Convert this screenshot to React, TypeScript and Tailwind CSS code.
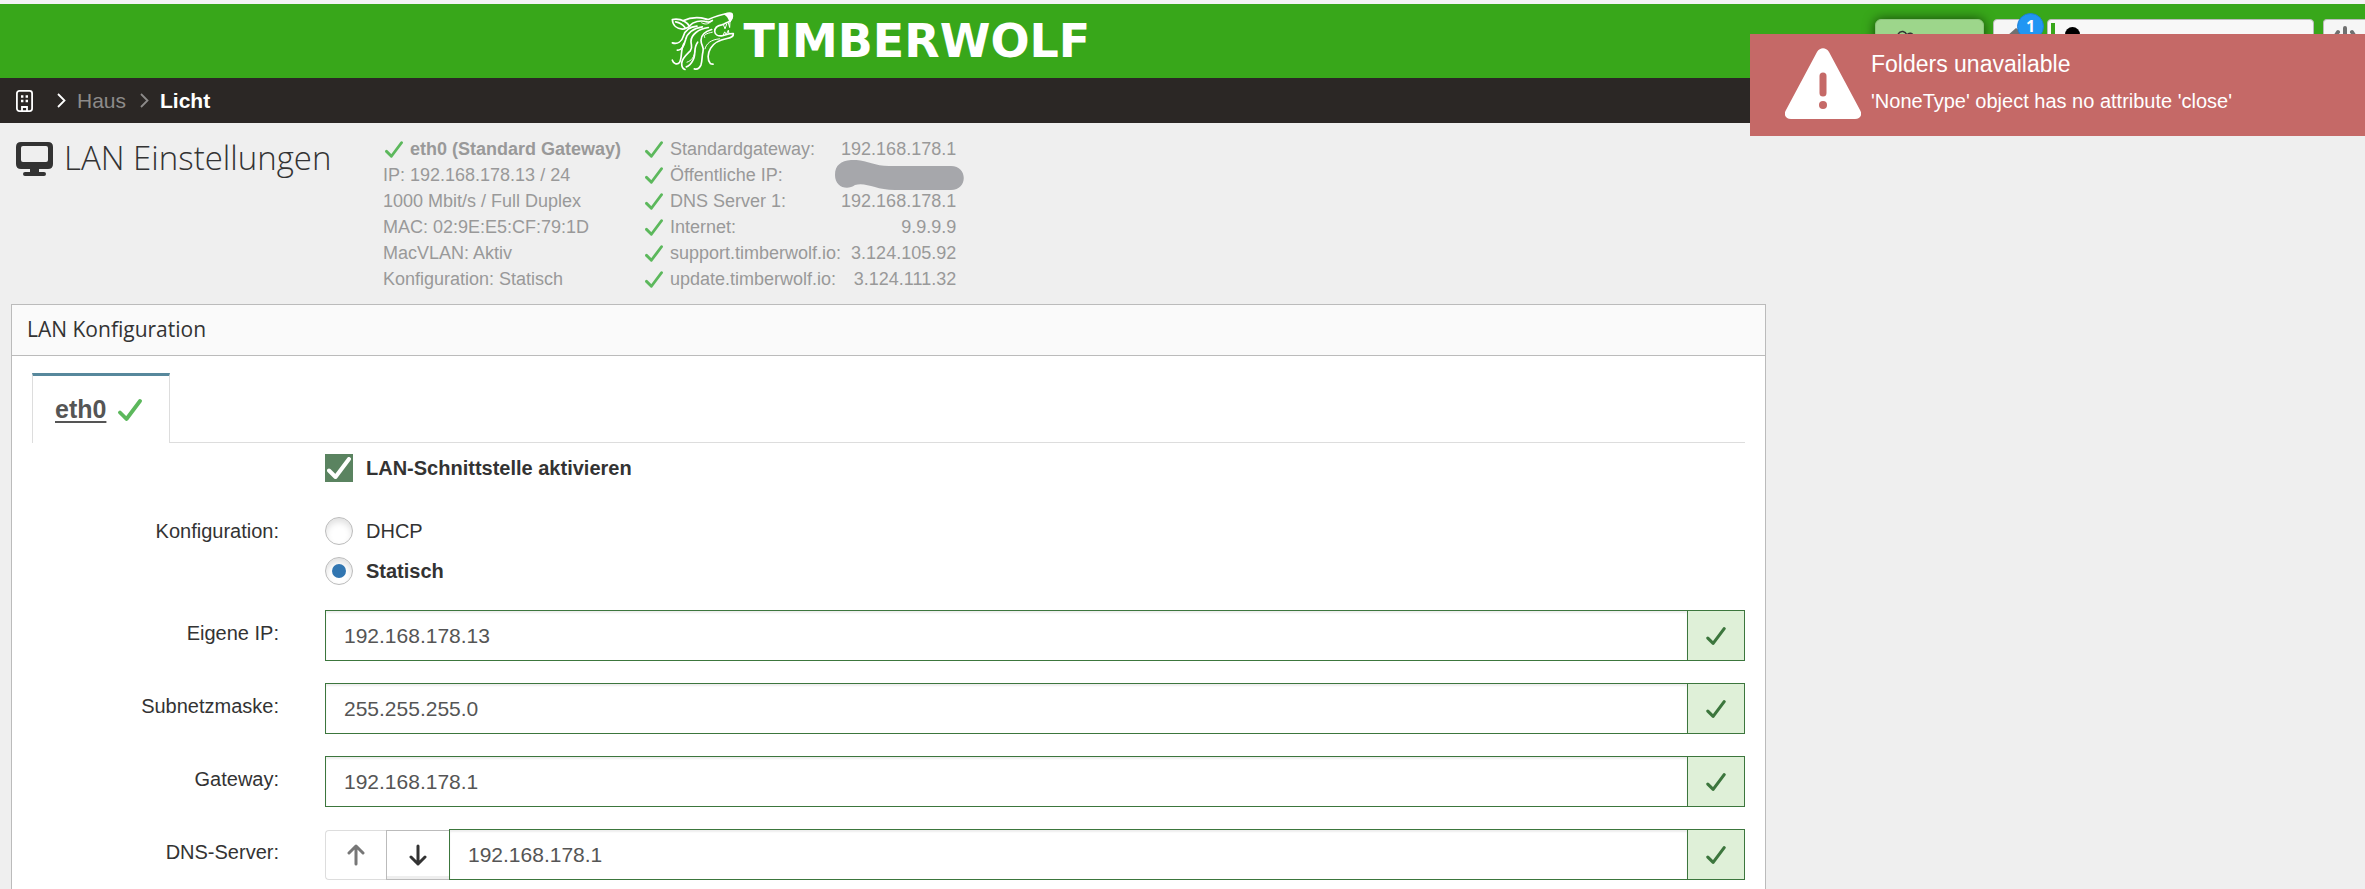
import React, { useState } from "react";

type Field = { id: string; label: string; value: string };

const interfaceInfo = [
  "IP: 192.168.178.13 / 24",
  "1000 Mbit/s / Full Duplex",
  "MAC: 02:9E:E5:CF:79:1D",
  "MacVLAN: Aktiv",
  "Konfiguration: Statisch",
];

const checks = [
  { label: "Standardgateway:", value: "192.168.178.1" },
  { label: "Öffentliche IP:", value: "" },
  { label: "DNS Server 1:", value: "192.168.178.1" },
  { label: "Internet:", value: "9.9.9.9" },
  { label: "support.timberwolf.io:", value: "3.124.105.92" },
  { label: "update.timberwolf.io:", value: "3.124.111.32" },
];

const initialFields: Field[] = [
  { id: "ip", label: "Eigene IP:", value: "192.168.178.13" },
  { id: "mask", label: "Subnetzmaske:", value: "255.255.255.0" },
  { id: "gateway", label: "Gateway:", value: "192.168.178.1" },
  { id: "dns", label: "DNS-Server:", value: "192.168.178.1" },
];

function Check({ className, width = 3.8 }: { className: string; width?: number }) {
  return (
    <svg viewBox="0 0 24 22" fill="none" stroke="currentColor" strokeWidth={width} strokeLinecap="round" strokeLinejoin="round" className={className}>
      <path d="M2 13.5 L8.5 20 L22 2" />
    </svg>
  );
}

function Chevron({ className }: { className: string }) {
  return (
    <svg viewBox="0 0 9 15" fill="none" stroke="currentColor" strokeWidth="1.8" className={className}>
      <path d="M1 1 L7.5 7.5 L1 14" />
    </svg>
  );
}

function WolfLogo() {
  return (
    <svg viewBox="94 34 192 176" fill="none" stroke="white" strokeWidth="5" strokeLinecap="round" strokeLinejoin="round" className="h-[59px] w-16">
      {/* ear */}
      <path d="M98 56 C99 74 112 84 128 85 C136 85 142 80 150 77 C140 62 124 52 98 56 Z" />
      <path d="M108 63 C120 65 130 72 136 80" />
      {/* head and snout */}
      <path d="M130 60 C150 50 168 49 184 51 C192 52 198 56 206 56 C224 48 244 41 262 38 C274 36 279 38 278 46 C277 54 274 58 271 61" />
      <path d="M262 38 C274 36 279 38 278 46 C277 54 274 58 271 61 C268 52 264 44 256 40 Z" fill="white" />
      <path d="M150 75 C160 62 182 57 202 63 C208 65 214 62 218 59" />
      <path d="M186 66 C196 72 206 70 212 64" strokeWidth="3" />
      {/* jaws */}
      <path d="M271 61 C262 64 254 70 246 72 C234 74 225 80 225 92 C226 102 236 106 246 105 C256 104 268 97 281 98 C282 106 274 111 262 113 C240 117 222 126 213 142 C203 158 203 178 212 188 C215 190 218 190 220 190" />
      <path d="M251 71 L256 84 L261 70 M266 66 L270 80 L271 62" strokeWidth="3" />
      <path d="M250 104 L255 93 L260 101 L266 88 L268 99" strokeWidth="3" />
      {/* fur */}
      <path d="M172 76 C148 78 136 90 131 106 C126 122 114 131 98 126" />
      <path d="M188 78 C160 82 142 98 138 116 C134 132 128 150 113 148" />
      <path d="M133 128 C122 146 128 170 120 184 C113 194 101 188 98 178" />
      <path d="M206 80 C176 84 154 102 154 122 C154 134 160 140 152 150 C140 162 126 172 126 188 C126 198 130 204 136 206" />
      <path d="M174 124 C160 142 170 162 160 178 C155 188 148 196 140 198" />
      <path d="M166 150 C164 168 156 180 142 184" strokeWidth="3" />
      <path d="M216 86 C196 92 184 104 184 118 C184 134 194 138 190 152 C186 168 188 180 184 192 C180 202 172 206 164 204" />
      <path d="M218 94 C200 98 190 102 195 110 M240 114 C214 116 200 128 196 144" strokeWidth="3" />
    </svg>
  );
}

function TopBar() {
  return (
    <header className="flex h-[78px] border-t-4 border-[#f3f3f3] bg-[#38a71a]">
      <div className="flex w-3/4 items-center justify-center gap-2 pr-3 text-white">
        <WolfLogo />
        <span className="font-['DejaVu_Sans',sans-serif] text-[46px] leading-none font-bold">TIMBERWOLF</span>
      </div>
      <div className="flex flex-1 items-start justify-end gap-[9px] pt-[15px]">
        <button aria-label="Cloud" className="flex h-10 w-[109px] items-start rounded-md border border-[#8cc47c] bg-[#9dd68b] pt-2.5 pl-5 text-[#333] shadow-[0_0_12px_rgba(0,0,0,0.6)]">
          <svg viewBox="0 0 22 16" fill="none" stroke="currentColor" strokeWidth="1.5" className="h-4 w-[22px]">
            <path d="M4 9 C0 5 3 1 7 1.5 C9 2 10 3 11 5 C13 2 17 3 17 6 M4 9 C1 11 3 15 6 15 H17 C22 13 21 7 17 6" />
          </svg>
        </button>
        <button aria-label="Meldungen" className="relative flex h-10 w-[45px] items-start rounded-t-sm border border-[#bbb] bg-[#f6f6f6] pt-2 pl-3 text-[#707070]">
          <svg viewBox="0 0 24 22" fill="currentColor" className="h-[22px] w-6">
            <path d="M10 0 L24 10 V22 H1 V8 Z" />
          </svg>
          <span className="absolute -top-[7px] left-[23px] flex h-[27px] w-[27px] justify-center rounded-full border border-[#1c80d8] bg-[#2196f3] pt-0.5 font-['Open_Sans',sans-serif] text-base leading-5 font-bold text-white">1</span>
        </button>
        <button aria-label="Benutzer" className="flex h-10 w-[267px] items-start gap-2.5 rounded-t-sm border border-[#bbb] bg-[#f8f8f8] pt-[3px] pl-[3px]">
          <span className="h-8 w-1 bg-[#38a71a]" />
          <span className="mt-1 h-4 w-[15px] rounded-full bg-black" />
        </button>
        <button aria-label="Abmelden" className="flex h-10 w-[42px] items-start justify-center rounded-tl-sm border border-r-0 border-[#bbb] bg-[#f6f6f6] pt-1.5 text-[#707070]">
          <svg viewBox="0 0 24 24" fill="none" stroke="currentColor" strokeWidth="4" strokeLinecap="round" className="h-6 w-6">
            <path d="M12 2 V12 M5 6 C-1 13 4 22 12 22 C20 22 25 13 19 6" />
          </svg>
        </button>
      </div>
    </header>
  );
}

function Toast() {
  return (
    <div role="alert" className="absolute top-[34px] right-0 flex h-[102px] w-[615px] bg-[#c56967] pt-3.5 pl-[35px] text-white">
      <svg viewBox="0 0 76 71" className="h-[71px] w-[76px]">
        <path d="M32 4 C35 -1 41 -1 44 4 L75 62 C78 67 75 71 70 71 H6 C1 71 -2 67 1 62 Z" fill="white" />
        <path d="M38 28 V45" stroke="#c56967" strokeWidth="7" strokeLinecap="round" />
        <circle cx="38" cy="57" r="4" fill="#c56967" />
      </svg>
      <div className="pl-2.5">
        <p className="text-[23px] leading-8">Folders unavailable</p>
        <p className="mt-[5px] text-xl leading-8">'NoneType' object has no attribute 'close'</p>
      </div>
    </div>
  );
}

function Breadcrumb() {
  return (
    <nav className="flex h-[45px] items-center bg-[#2b2725] pl-4 text-[21px]">
      <a href="#" aria-label="Start" className="text-white">
        <svg viewBox="0 0 17 22" fill="none" stroke="currentColor" strokeWidth="1.8" className="h-[22px] w-[17px]">
          <rect x="0.9" y="0.9" width="15.2" height="20.2" rx="2.5" />
          <path d="M6 21 V17 H11 V21" />
          <path d="M5 6.5 H7.4 M9.6 6.5 H12 M5 11 H7.4 M9.6 11 H12" strokeWidth="2.4" />
        </svg>
      </a>
      <Chevron className="ml-6 h-[15px] w-[9px] text-white" />
      <a href="#" className="ml-[11px] text-[#8d8b8a]">Haus</a>
      <Chevron className="ml-3.5 h-[15px] w-[9px] text-[#8d8b8a]" />
      <a href="#" className="ml-[11px] font-bold text-white">Licht</a>
    </nav>
  );
}

function PageHead() {
  return (
    <div className="flex pt-[13px] text-lg leading-[26px] text-[#999]">
      <div className="flex w-[383px] shrink-0 items-start pl-4 text-[#333]">
        <svg viewBox="0 0 37 34" fill="currentColor" className="mt-1.5 h-[34px] w-[37px]">
          <path fillRule="evenodd" d="M5 0 H32 Q37 0 37 5 V22 Q37 27 32 27 H23 V30 H28 Q30 30 30 32 T28 34 H9 Q7 34 7 32 T9 30 H14 V27 H5 Q0 27 0 22 V5 Q0 0 5 0 Z M7 4 Q5 4 5 6 V18 Q5 20 7 20 H30 Q32 20 32 18 V6 Q32 4 30 4 Z" />
        </svg>
        <h1 className="pl-[11px] font-['Open_Sans',sans-serif] text-[33px] leading-[44px] font-light whitespace-nowrap">LAN Einstellungen</h1>
      </div>
      <div className="w-[262px] shrink-0 whitespace-nowrap">
        <p className="flex items-center gap-[7px] font-bold">
          <Check className="ml-0.5 h-[17px] w-[18px] text-[#5cb85c]" />
          eth0 (Standard Gateway)
        </p>
        {interfaceInfo.map(line => (
          <p key={line}>{line}</p>
        ))}
      </div>
      <table>
        <tbody>
          {checks.map(check => (
            <tr key={check.label}>
              <th scope="row" className="p-0 text-left font-normal">
                <span className="flex items-center gap-[7px]">
                  <Check className="h-[17px] w-[18px] text-[#5cb85c]" />
                  {check.label}
                </span>
              </th>
              <td className="relative w-[115px] p-0 text-right">
                {check.value}
                {check.value === "" && (
                  <svg viewBox="0 0 129 30" fill="#a6a7ab" className="absolute -top-0.5 -right-2 h-[30px] w-[129px]">
                    <path d="M16 0 C30 -1 38 6 54 6 H116 C133 6 133 30 116 30 H60 C40 30 32 22 20 25 C12 31 0 27 0 15 C0 5 6 1 16 0 Z" />
                  </svg>
                )}
              </td>
            </tr>
          ))}
        </tbody>
      </table>
    </div>
  );
}

function Arrow({ className, down }: { className: string; down?: boolean }) {
  return (
    <svg viewBox="0 0 18 22" fill="none" stroke="currentColor" strokeWidth="3" strokeLinecap="round" strokeLinejoin="round" className={className}>
      <path d={down ? "M9 2 V20 M2 13 L9 20 L16 13" : "M9 20 V2 M2 9 L9 2 L16 9"} />
    </svg>
  );
}

function Radio({ label, checked, onChange }: { label: string; checked: boolean; onChange: () => void }) {
  return (
    <label className="flex items-center gap-[13px]">
      <span className="relative flex h-7 w-7">
        <input
          type="radio"
          name="mode"
          checked={checked}
          onChange={onChange}
          className="h-7 w-7 appearance-none rounded-full border border-[#bbb] bg-white shadow-[inset_0_4px_6px_rgba(0,0,0,0.12)]"
        />
        {checked && <span className="absolute inset-[7px] rounded-full bg-[#3276b1]" />}
      </span>
      <span className={checked ? "font-bold" : ""}>{label}</span>
    </label>
  );
}

export default function App() {
  const [enabled, setEnabled] = useState(true);
  const [mode, setMode] = useState("static");
  const [fields, setFields] = useState(initialFields);

  const updateField = (id: string, value: string) => {
    setFields(fields.map(f => (f.id === id ? { ...f, value } : f)));
  };

  return (
    <div className="relative flex min-h-screen flex-col overflow-hidden bg-[#efefef] font-['Liberation_Sans',sans-serif] text-[#333]">
      <TopBar />
      <Breadcrumb />
      <PageHead />

      <main className="mt-3 flex w-3/4 flex-1 flex-col pr-2 pl-[11px]">
        <section className="flex-1 border border-b-0 border-[#bbb] bg-white">
          <h2 className="flex h-[51px] items-center border-b border-[#bbb] bg-[#fafafa] pl-[15px] font-['Open_Sans',sans-serif] text-[21px]">
            LAN Konfiguration
          </h2>
          <div className="px-5 pt-[17px]">
            <div className="flex">
              <button className="flex h-[70px] w-[138px] items-center gap-3 border-x border-t-[3px] border-x-[#ddd] border-t-[#57889c] pl-[22px] text-[25px] font-bold text-[#555]">
                <span className="underline decoration-2 underline-offset-3">eth0</span>
                <Check className="h-[22px] w-6 text-[#5cb85c]" />
              </button>
              <div className="flex-1 border-b border-[#ddd]" />
            </div>

            <form className="text-xl leading-7">
              <label className="ml-[293px] flex w-fit items-center gap-[13px] pt-[11px] font-bold">
                <span className="relative flex h-7 w-7">
                  <input
                    type="checkbox"
                    checked={enabled}
                    onChange={e => setEnabled(e.target.checked)}
                    className="h-7 w-7 appearance-none border border-[#5a8360] checked:bg-[#5a8360]"
                  />
                  {enabled && <Check width={4} className="pointer-events-none absolute top-[3px] left-[2px] h-[22px] w-6 text-white" />}
                </span>
                LAN-Schnittstelle aktivieren
              </label>

              <fieldset className="mt-[35px] flex gap-[46px]">
                <legend className="float-left w-[247px] text-right">Konfiguration:</legend>
                <div className="flex flex-col gap-3">
                  <Radio label="DHCP" checked={mode === "dhcp"} onChange={() => setMode("dhcp")} />
                  <Radio label="Statisch" checked={mode === "static"} onChange={() => setMode("static")} />
                </div>
              </fieldset>

              <div className="flex flex-col gap-[22px] pt-[25px] pb-2">
                {fields.map(field => (
                  <div key={field.id} className="flex gap-[46px]">
                    <label htmlFor={field.id} className="w-[247px] shrink-0 pt-[9px] text-right">
                      {field.label}
                    </label>
                    <div className="flex h-[51px] flex-1">
                      {field.id === "dns" && (
                        <div className="flex pt-px">
                          <button type="button" aria-label="Nach oben" className="flex w-[61px] items-center justify-center rounded-l border border-r-0 border-[#ddd] text-[#777]">
                            <Arrow className="h-[22px] w-[18px]" />
                          </button>
                          <button type="button" aria-label="Nach unten" className="flex w-[63px] items-center justify-center border border-r-0 border-[#bbb] shadow-[inset_0_-3px_0_#eee]">
                            <Arrow down className="h-[22px] w-[18px]" />
                          </button>
                        </div>
                      )}
                      <input
                        id={field.id}
                        type="text"
                        value={field.value}
                        onChange={e => updateField(field.id, e.target.value)}
                        className="min-w-0 flex-1 border border-[#3c763d] bg-white pr-4 pl-[18px] text-[21px] text-[#555] shadow-[inset_0_2px_2px_rgba(0,0,0,0.07)] outline-none"
                      />
                      <span className="flex w-[57px] items-center justify-center border border-l-0 border-[#3c763d] bg-[#dff0d8] text-[#3c763d]">
                        <Check className="h-[18px] w-5" />
                      </span>
                    </div>
                  </div>
                ))}
              </div>
            </form>
          </div>
        </section>
      </main>

      <Toast />
    </div>
  );
}
